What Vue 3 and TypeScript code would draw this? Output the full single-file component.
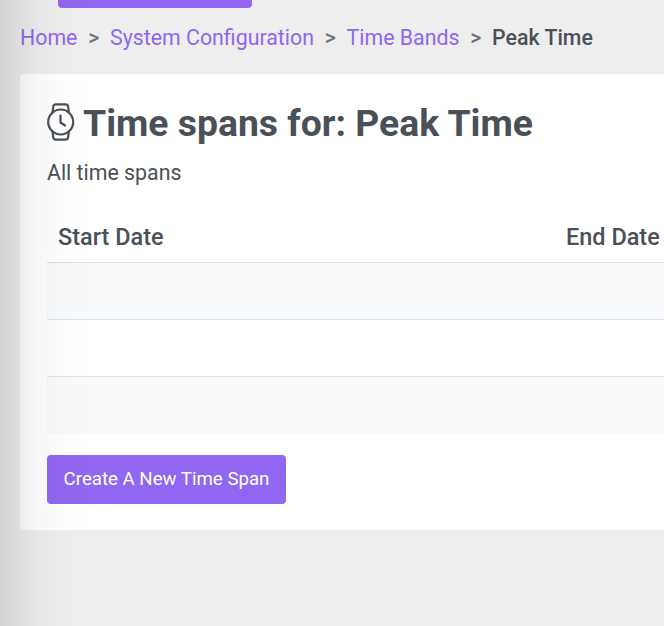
<script setup lang="ts">
const crumbs: { label: string; link: boolean }[] = [
  { label: 'Home', link: true },
  { label: 'System Configuration', link: true },
  { label: 'Time Bands', link: true },
  { label: 'Peak Time', link: false },
]
const rows: number[] = [1, 2, 3]
</script>

<template>
  <div class="page">
    <div class="top-button"></div>
    <nav class="breadcrumb">
      <template v-for="(c, i) in crumbs" :key="c.label">
        <span v-if="i > 0" class="sep">&gt;</span>
        <a v-if="c.link" class="crumb-link">{{ c.label }}</a>
        <span v-else class="crumb-current">{{ c.label }}</span>
      </template>
    </nav>
    <section class="card">
      <h1 class="title">
        <svg class="watch" viewBox="0 0 28 38" fill="none" stroke="currentColor" stroke-width="2.2" stroke-linecap="round" stroke-linejoin="round">
          <circle cx="13.7" cy="19" r="12.5" />
          <path d="M5.5 9.5 L6.3 3.6 Q6.6 1.4 8.8 1.4 H18.6 Q20.8 1.4 21.1 3.6 L21.9 9.5" />
          <path d="M5.5 28.5 L6.3 34.4 Q6.6 36.6 8.8 36.6 H18.6 Q20.8 36.6 21.1 34.4 L21.9 28.5" />
          <path d="M13.5 12.5 V19.5 L18 22.5" />
        </svg>
        <span>Time spans for: Peak Time</span>
      </h1>
      <p class="subtitle">All time spans</p>
      <div class="table">
        <div class="row head">
          <div class="cell">Start Date</div>
          <div class="cell">End Date</div>
        </div>
        <div v-for="r in rows" :key="r" class="row body-row" :class="{ striped: r % 2 === 1 }">
          <div class="cell"></div>
          <div class="cell"></div>
        </div>
      </div>
      <button class="create">Create A New Time Span</button>
    </section>
    <div class="edge-shadow"></div>
  </div>
</template>

<style>
html, body { margin: 0; background: #eeeeee; overflow: hidden; }
</style>

<style scoped>
.page {
  position: relative;
  width: 664px;
  height: 626px;
  overflow: hidden;
  background: #eeeeee;
  font-family: Roboto, "Liberation Sans", sans-serif;
  color: #495057;
}
.top-button {
  width: 194px;
  height: 8px;
  margin-left: 58px;
  background: #9166f0;
  border-radius: 0 0 4px 4px;
}
.breadcrumb {
  display: flex;
  align-items: center;
  height: 24px;
  margin: 18px 0 0 20px;
  font-size: 21.33px;
  line-height: 24px;
  white-space: nowrap;
}
.crumb-link { color: #9166f0; }
.crumb-current { font-weight: 500; color: #495057; }
.sep { margin: 0 10.75px; color: #6c757d; font-size: 21.33px; font-weight: 500; }
.card {
  width: 760px;
  height: 456px;
  margin: 24px 0 0 20px;
  padding: 25px 27px 0;
  box-sizing: border-box;
  background: #fff;
  border-radius: 4px;
}
.title {
  display: flex;
  align-items: center;
  gap: 8px;
  height: 48px;
  margin: 0;
  font-size: 37.33px;
  line-height: 48px;
  font-weight: 700;
  white-space: nowrap;
}
.watch { width: 28px; height: 38px; flex: none; margin-top: -3px; color: #495057; }
.subtitle {
  margin: 14px 0 0;
  font-size: 21.33px;
  line-height: 24px;
}
.table { margin-top: 19px; }
.row {
  display: grid;
  grid-template-columns: 508px 1fr;
}
.head {
  height: 59px;
  border-bottom: 1px solid #dee2e6;
  box-sizing: border-box;
  align-items: center;
  font-size: 23.47px;
  font-weight: 500;
}
.head .cell { padding: 8px 11px 0; }
.body-row {
  height: 57px;
  box-sizing: border-box;
  border-bottom: 1px solid #dee2e6;
}
.body-row:last-child { border-bottom: 0; }
.striped { background: #f8f9fb; }
.create {
  display: block;
  width: 239px;
  height: 49px;
  margin-top: 21px;
  padding: 0 0 2px;
  border: 0;
  border-radius: 4px;
  background: #9166f0;
  color: #fff;
  font-family: inherit;
  font-size: 18.67px;
  font-weight: 400;
}
.edge-shadow {
  position: absolute;
  left: 0;
  top: 0;
  bottom: 0;
  width: 90px;
  pointer-events: none;
  background: linear-gradient(to right, rgba(0,0,0,0.11), rgba(0,0,0,0.065) 20px, rgba(0,0,0,0.028) 40px, rgba(0,0,0,0.008) 65px, rgba(0,0,0,0));
}
</style>
